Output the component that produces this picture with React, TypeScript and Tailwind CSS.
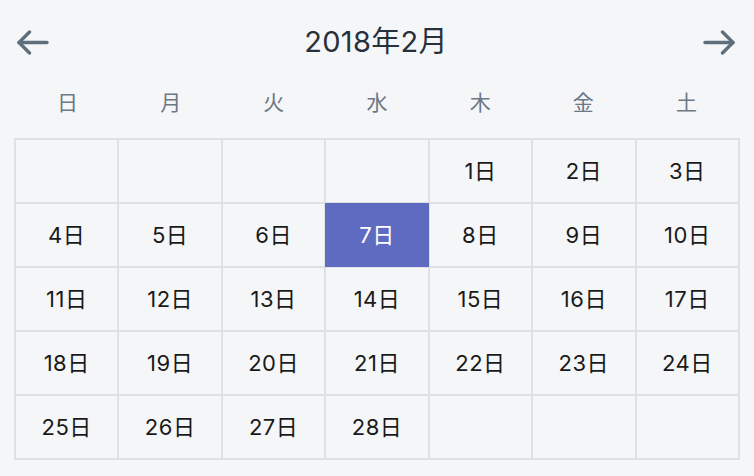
import React from "react";

const weekdays = ["日", "月", "火", "水", "木", "金", "土"];

// February 2018 starts on Thursday
const cells: (number | null)[] = [
  ...Array(4).fill(null),
  ...Array.from({ length: 28 }, (_, i) => i + 1),
  ...Array(3).fill(null),
];

const selectedDay = 7;

const Arrow: React.FC<{ dir: "left" | "right" }> = ({ dir }) => (
  <svg
    width="34"
    height="25"
    viewBox="0 0 34 25"
    fill="none"
    stroke="#5e6e7b"
    strokeWidth="3.4"
    strokeLinecap="round"
    strokeLinejoin="round"
    className={dir === "right" ? "-scale-x-100" : ""}
  >
    <path d="M31 12.5H3" />
    <path d="M13.5 2L3 12.5 13.5 23" />
  </svg>
);

export default function App() {
  return (
    <div
      className="min-h-[476px] w-[754px] bg-[#f5f6f8] px-[14px] pt-[18px]"
      style={{ fontFamily: 'Inter, "Noto Sans CJK JP", sans-serif' }}
    >
      {/* Header */}
      <div className="flex h-12 items-center justify-between pl-[2px] pr-[4px]">
        <button className="flex items-center" aria-label="前の月">
          <Arrow dir="left" />
        </button>
        <h1 className="text-[29px] font-normal tracking-[0.3px] text-[#27313c]">2018年2月</h1>
        <button className="flex items-center" aria-label="次の月">
          <Arrow dir="right" />
        </button>
      </div>

      {/* Weekdays */}
      <div className="mt-[18px] mb-4 grid h-[38px] grid-cols-7 items-center px-[2px]">
        {weekdays.map((w) => (
          <div key={w} className="text-center text-[21px] text-[#6b7886]">
            {w}
          </div>
        ))}
      </div>

      {/* Days */}
      <div className="grid grid-cols-7 gap-[2px] bg-[#dfe0e5] p-[2px]">
        {cells.map((d, i) => {
          const selected = d === selectedDay;
          return (
            <div
              key={i}
              className={
                selected
                  ? "relative -m-[1px] flex h-[64px] items-center justify-center bg-[#5e6bc1] text-[22px] tracking-[0.5px] text-white"
                  : "flex h-[62px] items-center justify-center bg-[#f5f6f8] text-[22px] tracking-[0.5px] text-[#1a1a1a]"
              }
            >
              {d ? `${d}日` : ""}
            </div>
          );
        })}
      </div>
    </div>
  );
}
